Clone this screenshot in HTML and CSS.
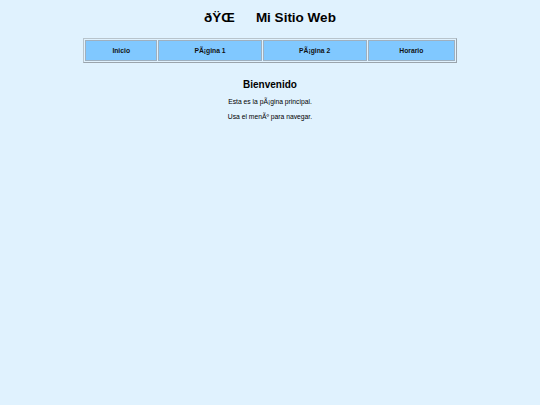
FILE: index.html
```html
<!DOCTYPE html>
<html lang="es">
<head>
<meta charset="utf-8">
<title>Mi Sitio Web</title>
<link rel="stylesheet" href="styles.css">
</head>
<body>
<header class="header">
  <h1 class="title"><span class="title-icon">ðŸŒ</span>Mi Sitio Web</h1>
</header>
<nav class="nav">
  <a class="nav-item nav-inicio" href="#">Inicio</a>
  <a class="nav-item nav-p1" href="#">PÃ¡gina 1</a>
  <a class="nav-item nav-p2" href="#">PÃ¡gina 2</a>
  <a class="nav-item nav-horario" href="#">Horario</a>
</nav>
<main class="content">
  <h2 class="heading">Bienvenido</h2>
  <p class="text">Esta es la pÃ¡gina principal.</p>
  <p class="text">Usa el menÃº para navegar.</p>
</main>
</body>
</html>
```
FILE: styles.css
```css
html, body {
  margin: 0;
  padding: 0;
}
body {
  background: #e0f2fe;
  font-family: "Liberation Sans", Arial, sans-serif;
  color: #000;
  width: 540px;
  height: 405px;
}
.header {
  padding-top: 10px;
}
.title {
  margin: 0;
  text-align: center;
  font-size: 13.5px;
  line-height: 16px;
  font-weight: bold;
}
.title-icon {
  margin-right: 21px;
}
.nav {
  display: flex;
  gap: 1px;
  width: 370px;
  margin: 12px auto 0;
  padding: 1px;
  border: 1px solid #b8c4cc;
  border-right-color: #9aa4ac;
  border-bottom-color: #9aa4ac;
}
.nav-item {
  display: flex;
  align-items: center;
  justify-content: center;
  height: 19px;
  background: #80c8ff;
  border: 1px solid #9fb0bf;
  color: #111;
  text-decoration: none;
  font-weight: bold;
  font-size: 6.75px;
}
.nav-inicio { width: 71px; }
.nav-p1 { width: 102px; }
.nav-p2 { width: 103px; }
.nav-horario { width: 86px; }
.content {
  text-align: center;
  padding-top: 16px;
}
.heading {
  margin: 0;
  font-size: 10px;
  line-height: 12px;
  font-weight: bold;
}
.text {
  font-size: 6.75px;
  line-height: 8px;
  margin: 7px 0 0;
}
```
